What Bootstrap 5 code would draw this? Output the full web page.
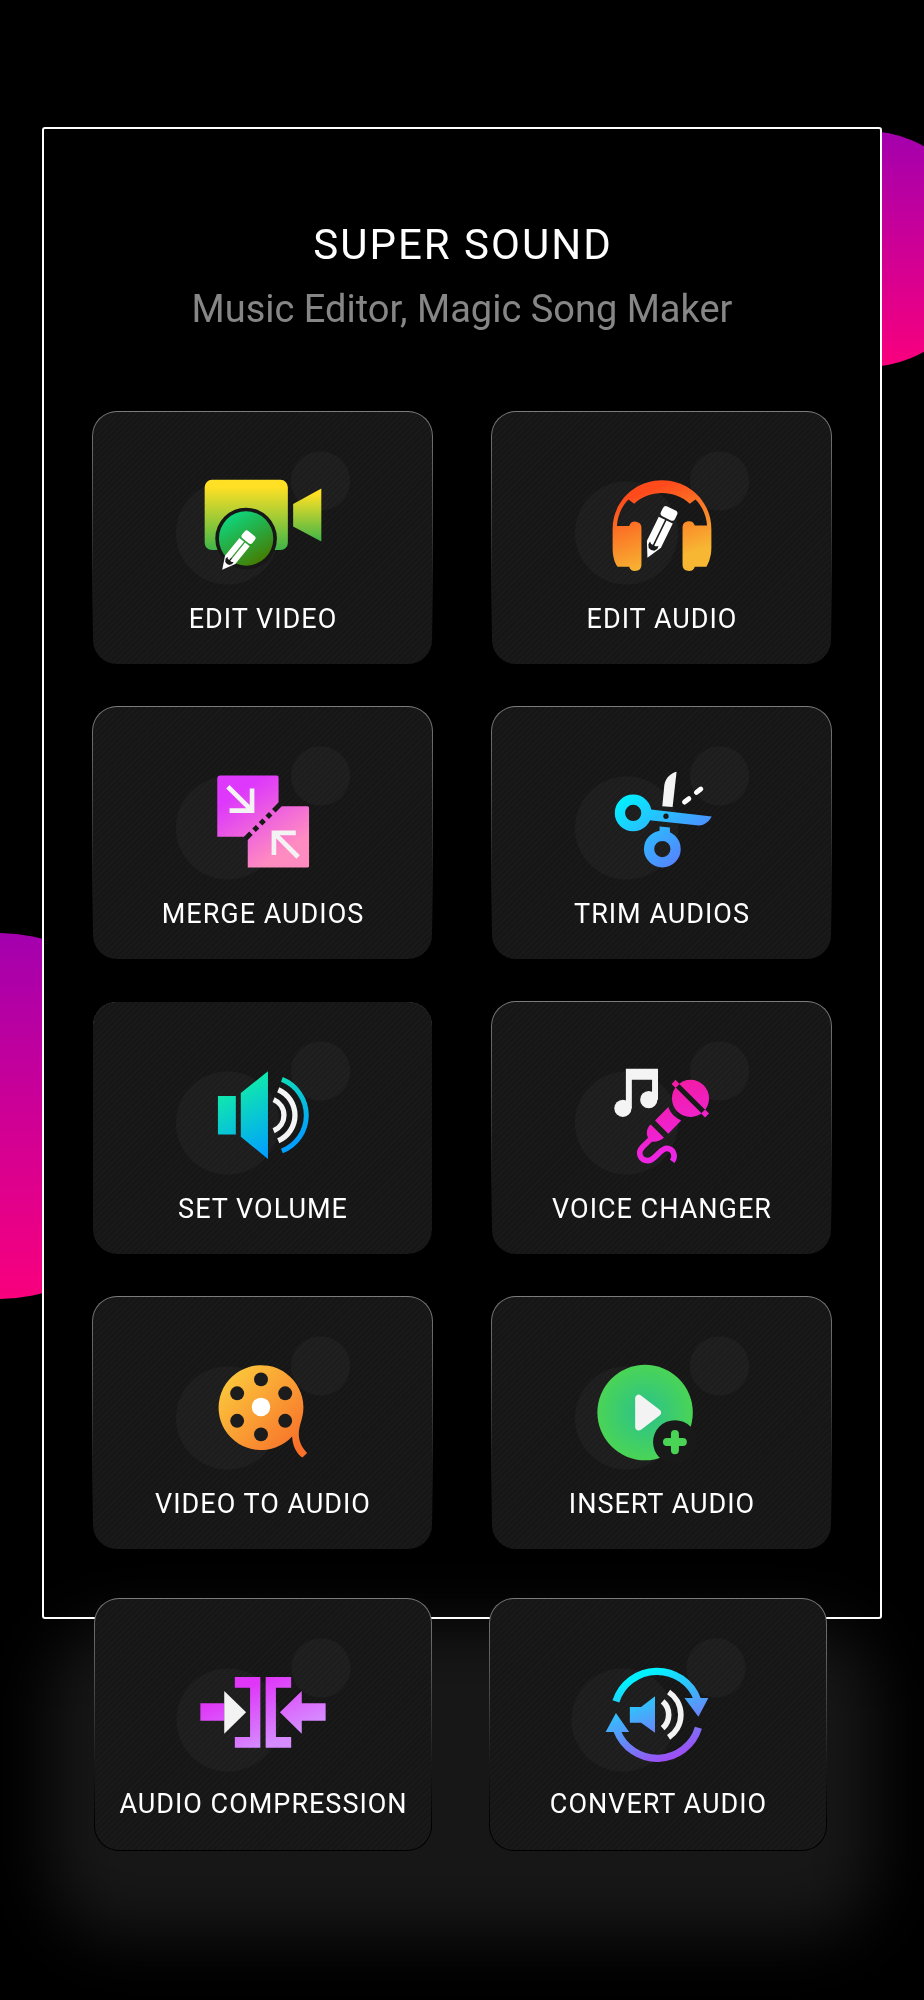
<!DOCTYPE html>
<html lang="en">
<head>
<meta charset="utf-8">
<meta name="viewport" content="width=device-width, initial-scale=1">
<title>Super Sound</title>
<link href="https://cdn.jsdelivr.net/npm/bootstrap@5.3.0/dist/css/bootstrap.min.css" rel="stylesheet">
<style>
  body { background: #000; color: #fff; font-family: Roboto, "Liberation Sans", sans-serif; }
  .stage { padding-top: 127px; padding-bottom: 150px; }
  .orb { position: absolute; border-radius: 50%; background: linear-gradient(#a300ae, #f9007d); }
  .orb-right { width: 236px; height: 236px; top: 131px; right: -60px; }
  .orb-left { width: 366px; height: 366px; top: 933px; left: -186px; }
  .frame { margin: 0 42px; border: 2px solid #fff; border-radius: 3px; background: #000; padding: 92px 48px 67px; }
  .app-title { font-size: 42px; line-height: 48px; letter-spacing: 2px; text-indent: 2px; font-weight: 400; }
  .app-tagline { font-size: 38px; line-height: 44px; color: #868686; padding: 18px 0 80px; }
  .tool-grid { display: grid; grid-template-columns: 1fr 1fr; column-gap: 58px; row-gap: 41px; }
  .tool {
    --bs-card-bg: transparent;
    height: 254px;
    border: 1px solid transparent;
    border-radius: 25px;
    color: #fff;
    text-decoration: none;
    text-align: center;
    background:
      radial-gradient(circle at calc(50% - 35px) 121px, rgba(255,255,255,.03) 51px, transparent 52px) padding-box,
      radial-gradient(circle at calc(50% + 58px) 69px, rgba(255,255,255,.03) 29px, transparent 30px) padding-box,
      repeating-linear-gradient(135deg, #161616 0 2px, #1a1a1a 3px 4px) padding-box,
      linear-gradient(#7c7c7c 0, #5c5c5c 25%, #1a1a1a 65%, #000 90%) border-box;
  }
  .tool-plain { border-color: #000; }
  .tool svg { display: block; width: 100%; height: 189px; }
  .tool-name { font-size: 27px; line-height: 36px; letter-spacing: 1px; text-indent: 1px; white-space: nowrap; }
  .extra { position: relative; margin-top: -21px; padding: 0 97px 0 94px; }
  .extra .tool-grid { column-gap: 57px; }
  .extra .tool { height: 253px; }
  .extra .tool svg { height: 187px; }
  .glow { position: absolute; inset: 28px 50px -84px; background: #171717; border-radius: 70px; filter: blur(32px); mix-blend-mode: screen; }
</style>
</head>
<body>
<svg width="0" height="0" class="position-absolute" aria-hidden="true">
  <defs>
    <linearGradient id="gVideo" x1="0" y1="0" x2="0" y2="1"><stop offset=".1" stop-color="#ffe024"/><stop offset="1" stop-color="#3fb548"/></linearGradient>
    <linearGradient id="gBadge" x1=".1" y1="0" x2=".7" y2="1"><stop offset=".1" stop-color="#0dd67c"/><stop offset="1" stop-color="#467a00"/></linearGradient>
    <linearGradient id="gPhones" x1=".35" y1="0" x2=".75" y2="1"><stop offset=".1" stop-color="#ff4a1c"/><stop offset=".85" stop-color="#f7b733"/></linearGradient>
    <linearGradient id="gMerge" x1=".2" y1=".1" x2=".7" y2=".85"><stop offset=".1" stop-color="#dd38fb"/><stop offset="1" stop-color="#ff8cc0"/></linearGradient>
    <linearGradient id="gTrim" gradientUnits="userSpaceOnUse" x1="430" y1="280" x2="600" y2="490"><stop offset="0" stop-color="#00f2ff"/><stop offset="1" stop-color="#5980ff"/></linearGradient>
    <linearGradient id="gVolume" gradientUnits="userSpaceOnUse" x1="480" y1="260" x2="590" y2="480"><stop offset="0" stop-color="#11efa6"/><stop offset="1" stop-color="#009fff"/></linearGradient>
    <linearGradient id="gVoice" gradientUnits="userSpaceOnUse" x1="540" y1="280" x2="620" y2="500"><stop offset="0" stop-color="#f21ba0"/><stop offset="1" stop-color="#ee26ee"/></linearGradient>
    <linearGradient id="gReel" x1=".1" y1=".1" x2=".9" y2=".9"><stop offset="0" stop-color="#fbc83c"/><stop offset="1" stop-color="#f8702a"/></linearGradient>
    <radialGradient id="gInsert"><stop offset="0" stop-color="#2ac28c"/><stop offset="1" stop-color="#4ad456"/></radialGradient>
    <linearGradient id="gPress" gradientUnits="userSpaceOnUse" x1="745" y1="310" x2="820" y2="480"><stop offset="0" stop-color="#df36f8"/><stop offset="1" stop-color="#d68bff"/></linearGradient>
    <linearGradient id="gConvert" gradientUnits="userSpaceOnUse" x1="540" y1="275" x2="640" y2="520"><stop offset="0" stop-color="#00f4ff"/><stop offset="1" stop-color="#9b51f5"/></linearGradient>
    <g id="pencil">
      <path fill="#fff" d="M-12-140H12Q20-140 20-132V-120Q20-112 12-112H-12Q-20-112-20-120V-132Q-20-140-12-140ZM-20-107H-2V-40H-20ZM2-107H20V-40H2ZM-20-42H20V-38L0 0L-20-38Z"/>
      <path fill="#1a1a1a" d="M-2-44H2V-36Q8-34 12-40L13-32L8-24Q0-20-8-24L-13-32L-12-40Q-8-34-2-36Z"/>
    </g>
  </defs>
</svg>

<main class="stage position-relative overflow-hidden">
  <div class="orb orb-right"></div>
  <div class="orb orb-left"></div>

  <section class="frame position-relative">
    <header class="text-center">
      <h1 class="app-title mb-0">SUPER SOUND</h1>
      <p class="app-tagline mb-0">Music Editor, Magic Song Maker</p>
    </header>
    <div class="tool-grid">
      <a class="card tool" href="#edit-video">
        <svg viewBox="36 33 1023 567" aria-hidden="true">
          <rect x="373" y="236" width="251" height="212" rx="22" fill="url(#gVideo)"/>
          <path fill="url(#gVideo)" d="M640 309L725 262V422L640 377Z"/>
          <circle cx="498" cy="413" r="93" fill="#171717"/>
          <circle cx="498" cy="413" r="82" fill="url(#gBadge)"/>
          <use href="#pencil" transform="translate(426 507) rotate(39)"/>
        </svg>
        <span class="tool-name">EDIT VIDEO</span>
      </a>
      <a class="card tool" href="#edit-audio">
        <svg viewBox="33 33 1023 567" aria-hidden="true">
          <path fill="url(#gPhones)" d="M397 440V385C397 300 465 237 546 237C627 237 695 300 695 385V440C695 465 688 485 680 498H645A19 19 0 0 1 608 492V380A19 19 0 0 1 645 374H682C680 345 668 315 647 295L630 308C585 265 507 265 462 308L445 295C424 315 412 345 410 375H447A19 19 0 0 1 484 380V492A19 19 0 0 1 447 498H412C402 485 397 465 397 440Z"/>
          <use href="#pencil" transform="translate(502 471) rotate(26) scale(1.18)"/>
        </svg>
        <span class="tool-name">EDIT AUDIO</span>
      </a>
      <a class="card tool" href="#merge-audios">
        <svg viewBox="36 18 1023 567" aria-hidden="true">
          <path fill="url(#gMerge)" d="M420 223H591Q596 223 596 228V316H683Q688 316 688 321V496Q688 501 683 501H503V408H411V232Q411 223 420 223Z"/>
          <path fill="none" stroke="#191919" stroke-width="15" stroke-dasharray="22 13 15 13 15 13 15 13 40" d="M497 413L604 307"/>
          <path fill="none" stroke="#f3f3f3" stroke-width="14" d="M443 257L515 328M516 262V329H448M655 469L583 397M648 396H582V463"/>
        </svg>
        <span class="tool-name">MERGE AUDIOS</span>
      </a>
      <a class="card tool" href="#trim-audios">
        <svg viewBox="33 18 1023 567" aria-hidden="true">
          <g fill="none" stroke="url(#gTrim)" stroke-width="31"><circle cx="459" cy="336" r="40"/><circle cx="547" cy="445" r="40"/></g>
          <path fill="url(#gTrim)" d="M506 325L696 347C690 360 675 374 657 374L508 358ZM539 377L570 380V398H538Z"/>
          <circle cx="558" cy="346" r="8" fill="#191919"/>
          <path fill="#f5f5f5" d="M547 316L553 252C556 230 575 215 590 212L578 318Z"/>
          <path stroke="#fff" stroke-width="15" stroke-linecap="round" d="M614 303L627 293M650 274L663 264"/>
        </svg>
        <span class="tool-name">TRIM AUDIOS</span>
      </a>
      <a class="card tool tool-plain" href="#set-volume">
        <svg viewBox="36 33 1023 567" aria-hidden="true">
          <path fill="url(#gVolume)" d="M413 315H467V431H413ZM482 306L564 240V505L482 438Z"/>
          <g fill="none" stroke-width="15">
            <path stroke="url(#gVolume)" d="M606 265A116 116 0 0 1 606 481"/>
            <path stroke="#f5f5f5" stroke-width="16" d="M595 296A84 84 0 0 1 595 450M581 326A51 51 0 0 1 581 420"/>
          </g>
        </svg>
        <span class="tool-name">SET VOLUME</span>
      </a>
      <a class="card tool" href="#voice-changer">
        <svg viewBox="33 33 1023 567" aria-hidden="true">
          <g fill="#f4f4f4"><path d="M437 233H534V326H516V266H455V352H437Z"/><circle cx="428" cy="352" r="26"/><circle cx="506" cy="326" r="26"/></g>
          <g fill="url(#gVoice)">
            <circle cx="632" cy="322" r="56"/>
            <path stroke="#191919" stroke-width="15" d="M586 277L676 367"/>
            <path d="M587 266L599 279L587 291L575 279ZM676 356L688 368L676 380L664 368Z"/>
            <path d="M565 348Q573 374 604 389L565 429L525 389ZM512 401L552 441Q535 455 515 453Q500 442 500 425Q502 408 512 401Z"/>
          </g>
          <path fill="none" stroke="url(#gVoice)" stroke-width="17" d="M512 445L488 468C468 489 484 510 503 510C516 510 522 501 535 489C544 480 551 472 562 473C580 475 589 495 577 512"/>
        </svg>
        <span class="tool-name">VOICE CHANGER</span>
      </a>
      <a class="card tool" href="#video-to-audio">
        <svg viewBox="36 18 1023 567" aria-hidden="true">
          <path fill="url(#gReel)" d="M671 348C671 385 657 400 657 430C657 455 668 472 682 487L668 501C650 488 638 465 637 437A128 128 0 1 1 671 348Z"/>
          <g fill="#1c1c1c"><circle cx="543" cy="265" r="21"/><circle cx="543" cy="431" r="21"/><circle cx="471" cy="307" r="21"/><circle cx="616" cy="307" r="21"/><circle cx="471" cy="390" r="21"/><circle cx="616" cy="390" r="21"/></g>
          <circle cx="543" cy="348" r="28" fill="#fff"/>
        </svg>
        <span class="tool-name">VIDEO TO AUDIO</span>
      </a>
      <a class="card tool" href="#insert-audio">
        <svg viewBox="33 18 1023 567" aria-hidden="true">
          <circle cx="495" cy="365" r="144" fill="url(#gInsert)"/>
          <circle cx="585" cy="454" r="66" fill="#191919"/>
          <path stroke="#4ad456" stroke-width="24" stroke-linecap="round" d="M585 430V479M561 454H609"/>
          <path fill="#f3f3f3" stroke="#f3f3f3" stroke-width="22" stroke-linejoin="round" d="M476 322V408L532 365Z"/>
        </svg>
        <span class="tool-name">INSERT AUDIO</span>
      </a>
    </div>
  </section>

  <section class="extra">
    <div class="glow"></div>
    <div class="tool-grid position-relative">
      <a class="card tool" href="#audio-compression">
        <svg viewBox="282 51 1014 561" aria-hidden="true">
          <path fill="url(#gPress)" d="M600 364H672V417H600ZM704 285H781V498H704V466H750V317H704ZM797 285H874V317H828V466H874V498H797ZM978 364V417H906V456L840 391L906 327V364Z"/>
          <path fill="#f3f3f3" d="M672 327L738 391L672 456Z"/>
        </svg>
        <span class="tool-name">AUDIO COMPRESSION</span>
      </a>
      <a class="card tool" href="#convert-audio">
        <svg viewBox="82 51 1014 561" aria-hidden="true">
          <g fill="none" stroke="url(#gConvert)" stroke-width="22"><path d="M462 358A130 130 0 0 1 708 353M465 446A130 130 0 0 0 711 438"/></g>
          <path fill="url(#gConvert)" d="M669 348H741L711 405ZM431 451H502L462 393ZM504 375H538L580 343V453L538 423H504Z"/>
          <path fill="none" stroke="#f3f3f3" stroke-width="17" d="M603 358A54 54 0 0 1 603 439M621 330A82 82 0 0 1 621 467"/>
        </svg>
        <span class="tool-name">CONVERT AUDIO</span>
      </a>
    </div>
  </section>
</main>
<script src="https://cdn.jsdelivr.net/npm/bootstrap@5.3.0/dist/js/bootstrap.bundle.min.js"></script>
</body>
</html>
